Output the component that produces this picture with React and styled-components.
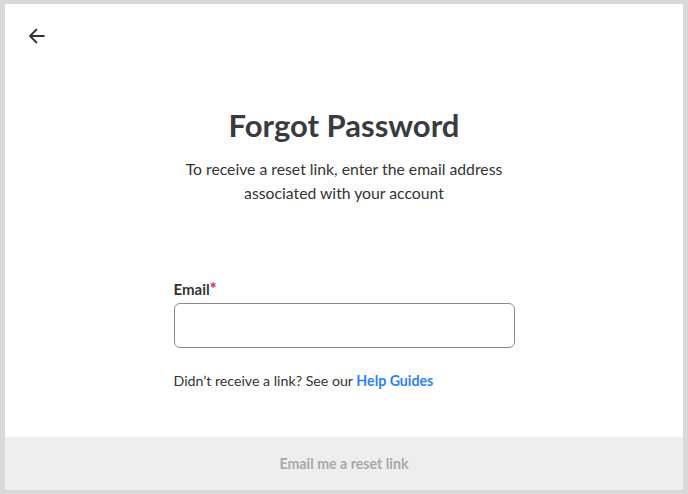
import React from "react";
import styled, { createGlobalStyle } from "styled-components";

const GlobalStyle = createGlobalStyle`
  html, body {
    margin: 0;
    padding: 0;
    background: #d9d9d9;
  }
  body {
    font-family: Lato, "Open Sans", sans-serif;
  }
`;

const Frame = styled.div`
  width: 688px;
  height: 494px;
  box-sizing: border-box;
  padding: 4px 5px 4px 5px;
`;

const Panel = styled.div`
  background: #fff;
  height: 100%;
  display: flex;
  flex-direction: column;
`;

const Top = styled.div`
  padding: 22px 0 0 22px;
  height: 28px;
`;

const BackButton = styled.button`
  border: none;
  background: none;
  padding: 0;
  width: 20px;
  height: 20px;
  cursor: pointer;
  color: #333;
  display: flex;
`;

const Body = styled.div`
  flex: 1;
  display: flex;
  flex-direction: column;
  align-items: center;
`;

const Title = styled.h1`
  margin: 51px 0 0;
  font-size: 31px;
  font-weight: 700;
  color: #3a3a3f;
  line-height: 40px;
`;

const Subtitle = styled.p`
  margin: 12px 0 0;
  font-size: 15.75px;
  line-height: 24px;
  color: #333;
  text-align: center;
`;

const Form = styled.div`
  width: 341px;
  margin-top: 74px;
`;

const Label = styled.label`
  display: block;
  font-size: 15px;
  font-weight: 700;
  color: #333;
  line-height: 20px;
`;

const Required = styled.span`
  color: #e5334b;
  font-size: 16px;
  font-weight: 900;
`;

const Input = styled.input`
  display: block;
  box-sizing: border-box;
  width: 100%;
  height: 45px;
  margin-top: 4px;
  border: 1px solid #8a8a8a;
  border-radius: 6px;
  font-size: 15px;
  padding: 0 12px;
  outline: none;
`;

const Help = styled.p`
  margin: 23px 0 0;
  font-size: 14.2px;
  color: #333;
  line-height: 20px;
`;

const HelpLink = styled.a`
  color: #2d7ff9;
  font-weight: 700;
  text-decoration: none;
`;

const Footer = styled.button`
  border: none;
  height: 53px;
  background: #eeeeee;
  color: #a8a8a8;
  font-family: Lato, sans-serif;
  font-size: 14.2px;
  font-weight: 700;
  cursor: default;
`;

export default function App() {
  return (
    <>
      <GlobalStyle />
      <Frame>
        <Panel>
          <Top>
            <BackButton aria-label="Back">
              <svg width="20" height="20" viewBox="0 0 20 20" fill="none" stroke="#333" strokeWidth="1.8" strokeLinecap="round" strokeLinejoin="round">
                <path d="M17 10H3M9.5 3.5L3 10l6.5 6.5" />
              </svg>
            </BackButton>
          </Top>
          <Body>
            <Title>Forgot Password</Title>
            <Subtitle>
              To receive a reset link, enter the email address
              <br />
              associated with your account
            </Subtitle>
            <Form>
              <Label htmlFor="email">
                Email<Required>*</Required>
              </Label>
              <Input id="email" type="email" />
              <Help>
                Didn’t receive a link? See our <HelpLink href="#">Help Guides</HelpLink>
              </Help>
            </Form>
          </Body>
          <Footer disabled>Email me a reset link</Footer>
        </Panel>
      </Frame>
    </>
  );
}
